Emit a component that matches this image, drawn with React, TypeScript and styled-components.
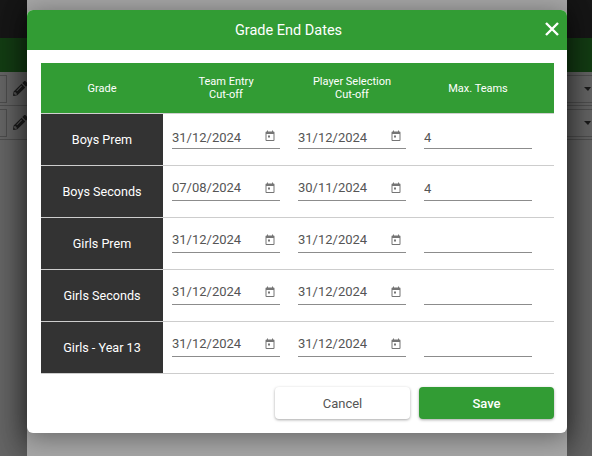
import styled, { createGlobalStyle } from "styled-components";
import { FaPencilAlt } from "react-icons/fa";

const GlobalStyle = createGlobalStyle`
  html, body {
    margin: 0;
    padding: 0;
    background: #fff;
    font-family: Roboto, "Liberation Sans", sans-serif;
  }
`;

const Screen = styled.div`
  position: relative;
  width: 592px;
  height: 456px;
  overflow: hidden;
`;

const TopBar = styled.div`
  height: 38px;
  background: #3a3a3a;
`;

const NavBar = styled.div`
  height: 34px;
  background: #329c34;
`;

const BackRow = styled.div`
  display: flex;
  align-items: center;
  justify-content: space-between;
  height: 33px;
  border-bottom: 1px solid #c8c8c8;
  background: #fff;
`;

const BackLeft = styled.div`
  display: flex;
  align-items: center;
  gap: 6px;
`;

const BackInput = styled.div`
  width: 6px;
  height: 26px;
  border: 1px solid #c4c4c4;
  border-left: 0;
`;

const PencilIcon = styled(FaPencilAlt)`
  width: 15px;
  height: 15px;
  color: #4a4a4a;
`;

const BackSelect = styled.div`
  display: flex;
  align-items: center;
  justify-content: flex-end;
  width: 200px;
  height: 26px;
  border-top: 1px solid #c8c8c8;
  border-bottom: 1px solid #c8c8c8;
  padding-right: 1px;
`;

const Caret = styled.span`
  width: 0;
  height: 0;
  border-left: 4px solid transparent;
  border-right: 3px solid transparent;
  border-top: 4px solid #444;
`;

const Overlay = styled.div`
  position: absolute;
  inset: 0;
  background: rgba(0, 0, 0, 0.6);
`;

const ModalColumn = styled.div`
  position: absolute;
  top: 0;
  bottom: 0;
  left: 27px;
  width: 540px;
  background: #a6a6a6;
  box-shadow: 0 0 36px rgba(0, 0, 0, 0.55);
`;

const Dialog = styled.div`
  margin-top: 10px;
  height: 423px;
  background: #fff;
  border-radius: 6px;
  box-shadow: 0 4px 26px rgba(0, 0, 0, 0.4);
  overflow: hidden;
`;

const DialogHeader = styled.div`
  position: relative;
  display: flex;
  align-items: center;
  justify-content: center;
  height: 40px;
  padding-right: 17px;
  background: #329c34;
  color: #fff;
  font-size: 14.5px;
`;

const CloseButton = styled.button`
  position: absolute;
  top: 12px;
  right: 8px;
  display: flex;
  width: 14px;
  height: 14px;
  padding: 0;
  border: 0;
  background: none;
  color: #fff;
`;

const Body = styled.div`
  padding: 13px 13px 0 14px;
`;

const HeadRow = styled.div`
  display: grid;
  grid-template-columns: 122px repeat(3, 126px);
  align-items: center;
  height: 50px;
  padding-right: 13px;
  background: #329c34;
  color: #fff;
  font-size: 11px;
  line-height: 13px;
  text-align: center;
  border-bottom: 1px solid #d0d0d0;
`;

const Row = styled.div`
  display: grid;
  grid-template-columns: 122px repeat(3, 126px);
  height: 51px;
  padding-right: 13px;
  border-bottom: 1px solid #cdcdcd;
`;

const GradeCell = styled.div`
  display: flex;
  align-items: center;
  justify-content: center;
  background: #333;
  color: #fff;
  font-size: 12.6px;
`;

const FieldCell = styled.div`
  padding: 9px 9px 0;
`;

const Field = styled.div`
  position: relative;
  display: flex;
  align-items: center;
  height: 25px;
  border-bottom: 1px solid #8c8c8c;
`;

const TextInput = styled.input<{ $drop: number }>`
  box-sizing: border-box;
  width: 100%;
  height: 100%;
  padding: ${(p) => p.$drop}px 0 0;
  border: 0;
  outline: 0;
  background: none;
  color: #555;
  font-family: inherit;
  font-size: 13px;
`;

const CalendarIcon = styled.svg`
  position: absolute;
  top: 7px;
  right: 4px;
  width: 12px;
  height: 12px;
  color: #757575;
`;

const Footer = styled.div`
  display: flex;
  justify-content: flex-end;
  gap: 9px;
  padding: 13px 13px 0 0;
`;

const ActionButton = styled.button<{ $primary?: boolean }>`
  width: 135px;
  height: 32px;
  border: 0;
  border-radius: 4px;
  background: ${(p) => (p.$primary ? "#329c34" : "#fff")};
  color: ${(p) => (p.$primary ? "#fff" : "#555")};
  font-family: inherit;
  font-size: 13px;
  font-weight: ${(p) => (p.$primary ? 500 : 400)};
  box-shadow: 0 1px 3px rgba(0, 0, 0, 0.35);
`;

const grades = [
  { name: "Boys Prem", entry: "31/12/2024", player: "31/12/2024", max: "4" },
  { name: "Boys Seconds", entry: "07/08/2024", player: "30/11/2024", max: "4" },
  { name: "Girls Prem", entry: "31/12/2024", player: "31/12/2024", max: "" },
  { name: "Girls Seconds", entry: "31/12/2024", player: "31/12/2024", max: "" },
  { name: "Girls - Year 13", entry: "31/12/2024", player: "31/12/2024", max: "" },
];

function Calendar() {
  return (
    <CalendarIcon viewBox="0 0 24 24" fill="currentColor">
      <path d="M19 3h-1V1h-2v2H8V1H6v2H5a2 2 0 0 0-2 2v15a2 2 0 0 0 2 2h14a2 2 0 0 0 2-2V5a2 2 0 0 0-2-2zm0 17H5V8h14z" />
      <path d="M8 11h4v4H8z" />
    </CalendarIcon>
  );
}

function DateField({ value, drop }: { value: string; drop: number }) {
  return (
    <FieldCell>
      <Field>
        <TextInput readOnly value={value} $drop={drop} />
        <Calendar />
      </Field>
    </FieldCell>
  );
}

export default function App() {
  return (
    <Screen>
      <GlobalStyle />
      <TopBar />
      <NavBar />
      {[0, 1].map((i) => (
        <BackRow key={i}>
          <BackLeft>
            <BackInput />
            <PencilIcon />
          </BackLeft>
          <BackSelect>
            <Caret />
          </BackSelect>
        </BackRow>
      ))}
      <Overlay />
      <ModalColumn>
        <Dialog>
          <DialogHeader>
            Grade End Dates
            <CloseButton aria-label="Close">
              <svg viewBox="0 0 14 14" width="14" height="14">
                <path d="M1 1l12 12M13 1L1 13" stroke="currentColor" strokeWidth="2.4" fill="none" />
              </svg>
            </CloseButton>
          </DialogHeader>
          <Body>
            <HeadRow>
              <div>Grade</div>
              <div>
                Team Entry
                <br />
                Cut-off
              </div>
              <div>
                Player Selection
                <br />
                Cut-off
              </div>
              <div>Max. Teams</div>
            </HeadRow>
            {grades.map((g, i) => (
              <Row key={g.name}>
                <GradeCell>{g.name}</GradeCell>
                <DateField value={g.entry} drop={i === 0 ? 3 : 0} />
                <DateField value={g.player} drop={i === 0 ? 3 : 0} />
                <FieldCell>
                  <Field>
                    <TextInput readOnly value={g.max} $drop={i === 0 ? 3 : 2} />
                  </Field>
                </FieldCell>
              </Row>
            ))}
          </Body>
          <Footer>
            <ActionButton>Cancel</ActionButton>
            <ActionButton $primary>Save</ActionButton>
          </Footer>
        </Dialog>
      </ModalColumn>
    </Screen>
  );
}
